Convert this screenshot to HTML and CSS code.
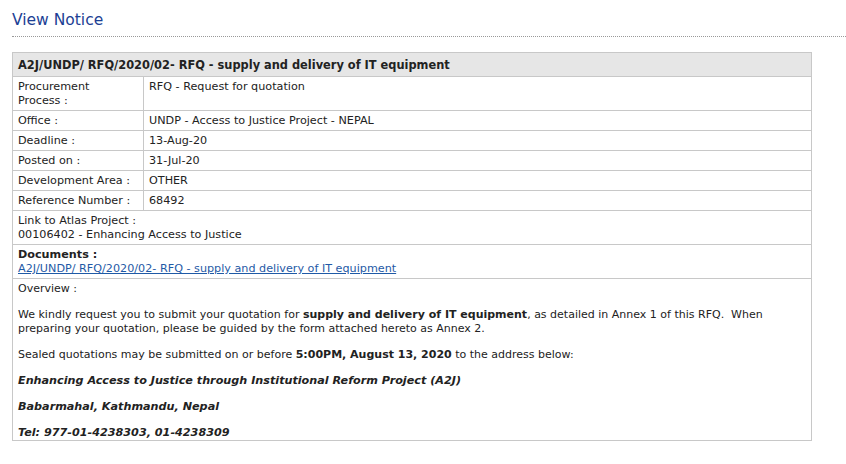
FILE: index.html
```html
<!DOCTYPE html>
<html>
<head>
<meta charset="utf-8">
<title>View Notice</title>
<link rel="stylesheet" href="styles.css">
</head>
<body>
<div class="page">
  <h1 class="title">View Notice</h1>
  <table class="notice">
    <tr><th colspan="2" class="head">A2J/UNDP/ RFQ/2020/02- RFQ - supply and delivery of IT equipment</th></tr>
    <tr><td class="label">Procurement<br>Process :</td><td>RFQ - Request for quotation</td></tr>
    <tr><td class="label">Office :</td><td>UNDP - Access to Justice Project - NEPAL</td></tr>
    <tr><td class="label">Deadline :</td><td>13-Aug-20</td></tr>
    <tr><td class="label">Posted on :</td><td>31-Jul-20</td></tr>
    <tr><td class="label">Development Area :</td><td>OTHER</td></tr>
    <tr><td class="label">Reference Number :</td><td>68492</td></tr>
    <tr><td colspan="2">Link to Atlas Project :<br>00106402 - Enhancing Access to Justice</td></tr>
    <tr><td colspan="2"><strong>Documents :</strong><br><a href="#" class="doc">A2J/UNDP/ RFQ/2020/02- RFQ - supply and delivery of IT equipment</a></td></tr>
    <tr><td colspan="2" class="overview">
      <div>Overview :</div>
      <p>We kindly request you to submit your quotation for <strong>supply and delivery of IT equipment</strong>, as detailed in Annex 1 of this RFQ.&nbsp; When preparing your quotation, please be guided by the form attached hereto as Annex 2.</p>
      <p>Sealed quotations may be submitted on or before <strong>5:00PM, August 13, 2020</strong> to the address below:</p>
      <p class="addr">Enhancing Access to Justice through Institutional Reform Project (A2J)</p>
      <p class="addr">Babarmahal, Kathmandu, Nepal</p>
      <p class="addr">Tel: 977-01-4238303, 01-4238309</p>
    </td></tr>
  </table>
</div>
</body>
</html>
```
FILE: styles.css
```css
html, body {
  margin: 0;
  padding: 0;
  background: #fff;
}
body {
  font-family: "DejaVu Sans", Verdana, sans-serif;
  font-size: 11.2px;
  color: #222;
}
.page {
  padding: 0 0 0 12px;
}
.title {
  margin: 0;
  padding: 12px 0 7px 0;
  font-size: 15.5px;
  font-weight: normal;
  color: #1c3f94;
  line-height: 17px;
  border-bottom: 1px dotted #999;
}
.notice {
  margin-top: 15px;
  width: 800px;
  border-collapse: collapse;
  border: 1px solid #c8c8c8;
}
.notice th, .notice td {
  border: 1px solid #c8c8c8;
  padding: 3px 5px 2px 5px;
  line-height: 14px;
  text-align: left;
  vertical-align: top;
}
.notice th.head {
  background: #e6e6e6;
  font-weight: bold;
  font-size: 11.4px;
  padding: 5px 5px 4px 5px;
  color: #222;
}
.label {
  width: 120px;
}
.doc {
  color: #1f5aa6;
  text-decoration: underline;
}
.notice td.overview {
  font-size: 11px;
  padding-bottom: 0;
}
.overview p {
  margin: 12px 0 0 0;
}
.overview .addr {
  font-weight: bold;
  font-style: italic;
  font-size: 11.2px;
}
```
